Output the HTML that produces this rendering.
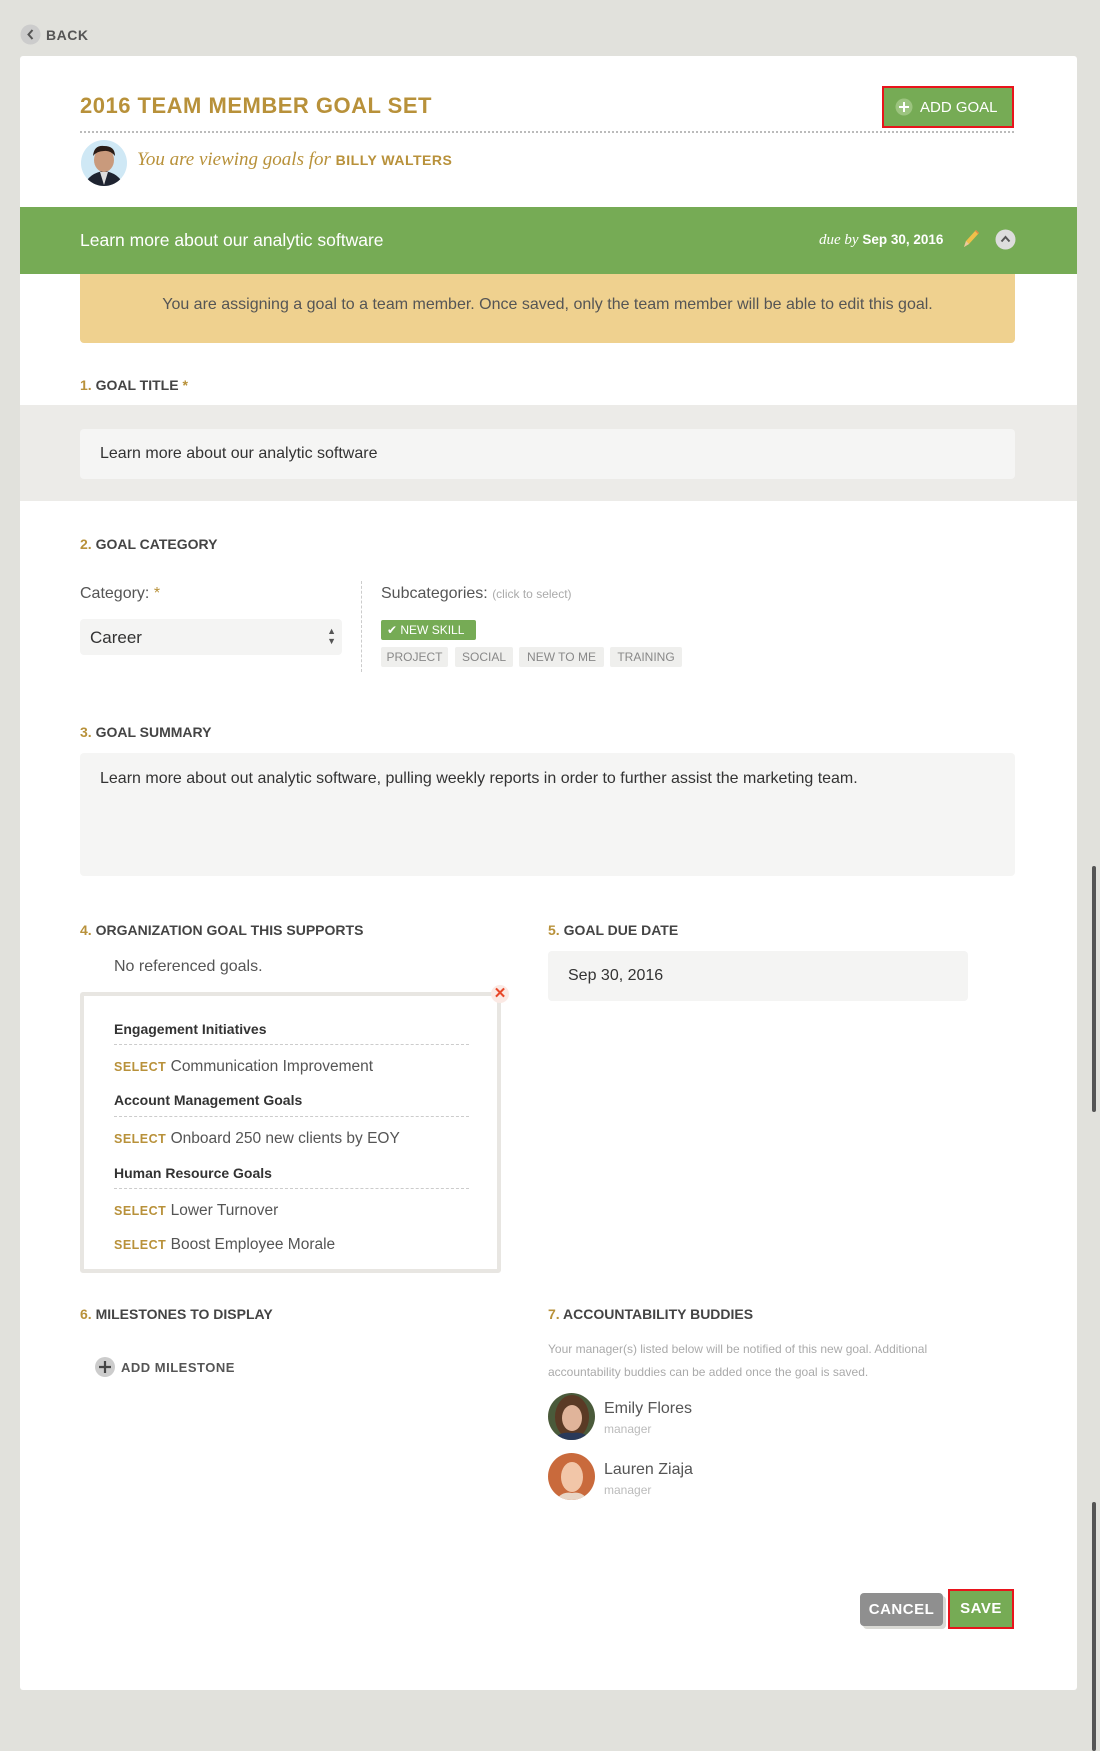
<!DOCTYPE html>
<html><head><meta charset="utf-8"><style>
*{box-sizing:border-box;margin:0;padding:0}
body{width:1100px;height:1751px;background:#e1e1dc;font-family:"Liberation Sans",sans-serif;position:relative;overflow:hidden;color:#444}
.a{position:absolute}
.card{position:absolute;left:20px;top:56px;width:1057px;height:1634px;background:#fff;border-radius:3px}
.h{font-size:14px;font-weight:bold;color:#444;position:absolute}
.h b{color:#b8913a}
.in{position:absolute;background:#f4f4f3;border-radius:4px;font-size:16px;color:#333}
.tag{position:absolute;top:647px;height:20px;background:#efefed;color:#888;font-size:12px;line-height:20px;text-align:center;border-radius:2px}
.sel{position:absolute;left:114px;font-size:15.5px;color:#555}
.sel b{color:#b8913a;font-size:12.5px;letter-spacing:.5px}
.grp{position:absolute;left:114px;font-size:14px;font-weight:bold;color:#333}
.dl{position:absolute;left:114px;width:355px;border-top:1px dashed #ccc}
</style></head><body>
<svg class="a" style="left:20px;top:24px" width="21" height="21"><circle cx="10.5" cy="10.5" r="10" fill="#ccc"/><path d="M12.5 6 L8.5 10.5 L12.5 15" stroke="#555" stroke-width="2" fill="none"/></svg>
<div class="a" style="left:46px;top:27px;font-size:14px;font-weight:bold;color:#555;letter-spacing:.5px">BACK</div>
<div class="card"></div>
<div class="a" style="left:80px;top:93px;font-size:22px;font-weight:bold;color:#b8913a;letter-spacing:.5px">2016 TEAM MEMBER GOAL SET</div>
<div class="a" style="left:882px;top:86px;width:132px;height:42px;border:2px solid #e8141c;background:#76ab55"></div>
<svg class="a" style="left:895px;top:98px" width="18" height="18"><circle cx="9" cy="9" r="8.5" fill="#9cc47f"/><path d="M9 4v10M4 9h10" stroke="#fff" stroke-width="2"/></svg>
<div class="a" style="left:920px;top:99px;font-size:15px;color:#fff">ADD GOAL</div>
<div class="a" style="left:80px;top:131px;width:934px;border-top:2px dotted #bbb"></div>
<svg class="a" style="left:80px;top:139px" width="48" height="48"><defs><clipPath id="c"><circle cx="24" cy="24" r="23"/></clipPath></defs><g clip-path="url(#c)"><rect width="48" height="48" fill="#cfe8f5"/><path d="M4 48 Q8 34 24 32 Q40 34 44 48Z" fill="#1e2330"/><path d="M20 33 L24 46 L28 33Z" fill="#ddd"/><ellipse cx="24" cy="21" rx="10" ry="12" fill="#c99a7c"/><path d="M13 17 Q14 6 24 7 Q35 7 35 17 Q30 11 24 12 Q17 12 13 17Z" fill="#2a1c16"/></g></svg>
<div class="a" style="left:137px;top:149px;font-family:'Liberation Serif',serif;font-style:italic;font-size:19px;color:#b8913a">You are viewing goals for <span style="font-family:'Liberation Sans';font-style:normal;font-weight:bold;font-size:14px;letter-spacing:.5px">BILLY WALTERS</span></div>
<div class="a" style="left:20px;top:207px;width:1057px;height:67px;background:#76ab55"></div>
<div class="a" style="left:80px;top:230px;font-size:17.5px;color:#fff">Learn more about our analytic software</div>
<div class="a" style="left:819px;top:232px;font-size:13.5px;color:#fff"><i style="font-family:'Liberation Serif',serif;font-size:15px">due by</i> <b>Sep 30, 2016</b></div>
<svg class="a" style="left:960px;top:228px" width="20" height="22"><path d="M4 19 L6 13 L16 2 L19 5 L9 16Z" fill="#f0c04a"/><path d="M4 19 L6 13 L9 16Z" fill="#e9c9a0"/><path d="M16 2 L19 5 L18 6 L15 3Z" fill="#d84"/></svg>
<svg class="a" style="left:995px;top:229px" width="21" height="21"><circle cx="10.5" cy="10.5" r="10" fill="#ddd"/><path d="M6.5 12.5 L10.5 8 L14.5 12.5" stroke="#555" stroke-width="2" fill="none"/></svg>
<div class="a" style="left:80px;top:274px;width:935px;height:69px;background:#efd18f;border-radius:0 0 4px 4px;font-size:16px;color:#555;text-align:center;line-height:62px">You are assigning a goal to a team member. Once saved, only the team member will be able to edit this goal.</div>
<div class="h" style="left:80px;top:377px"><b>1.</b> GOAL TITLE <b>*</b></div>
<div class="a" style="left:20px;top:405px;width:1057px;height:96px;background:#ecebe8"></div>
<div class="in" style="left:80px;top:429px;width:935px;height:50px;padding:16px 20px;background:#f5f5f4">Learn more about our analytic software</div>
<div class="h" style="left:80px;top:536px"><b>2.</b> GOAL CATEGORY</div>
<div class="a" style="left:80px;top:585px;font-size:16px;color:#555">Category: <span style="color:#b8913a">*</span></div>
<div class="in" style="left:80px;top:619px;width:262px;height:36px;padding:9px 10px;font-size:17px">Career<span style="position:absolute;right:6px;top:7px;font-size:9px;line-height:10px;color:#555">▲<br>▼</span></div>
<div class="a" style="left:361px;top:581px;height:91px;border-left:1px dashed #ccc"></div>
<div class="a" style="left:381px;top:585px;font-size:16px;color:#555">Subcategories: <span style="font-size:12px;color:#aaa">(click to select)</span></div>
<div class="a" style="left:381px;top:620px;width:95px;height:20px;background:#76ab55;border-radius:2px;color:#fff;font-size:12px;line-height:20px;padding-left:6px">✔ NEW SKILL</div>
<div class="tag" style="left:381px;width:67px">PROJECT</div>
<div class="tag" style="left:455px;width:58px">SOCIAL</div>
<div class="tag" style="left:519px;width:85px">NEW TO ME</div>
<div class="tag" style="left:610px;width:72px">TRAINING</div>
<div class="h" style="left:80px;top:724px"><b>3.</b> GOAL SUMMARY</div>
<div class="in" style="left:80px;top:753px;width:935px;height:123px;padding:17px 20px;background:#f5f5f4">Learn more about out analytic software, pulling weekly reports in order to further assist the marketing team.</div>
<div class="h" style="left:80px;top:922px"><b>4.</b> ORGANIZATION GOAL THIS SUPPORTS</div>
<div class="h" style="left:548px;top:922px"><b>5.</b> GOAL DUE DATE</div>
<div class="a" style="left:114px;top:958px;font-size:16px;color:#555">No referenced goals.</div>
<div class="in" style="left:548px;top:951px;width:420px;height:50px;padding:16px 20px">Sep 30, 2016</div>
<div class="a" style="left:80px;top:992px;width:421px;height:281px;border:4px solid #e8e6e2;border-radius:3px"></div>
<div class="a" style="left:491px;top:985px;width:18px;height:18px;border-radius:9px;background:#fbe9e4;color:#e8482a;font-weight:bold;font-size:15px;text-align:center;line-height:18px">✕</div>
<div class="grp" style="left:114px;top:1021px">Engagement Initiatives</div><div class="dl" style="top:1044px"></div>
<div class="sel" style="top:1058px"><b>SELECT</b> Communication Improvement</div>
<div class="grp" style="top:1092px">Account Management Goals</div><div class="dl" style="top:1116px"></div>
<div class="sel" style="top:1130px"><b>SELECT</b> Onboard 250 new clients by EOY</div>
<div class="grp" style="top:1165px">Human Resource Goals</div><div class="dl" style="top:1188px"></div>
<div class="sel" style="top:1202px"><b>SELECT</b> Lower Turnover</div>
<div class="sel" style="top:1236px"><b>SELECT</b> Boost Employee Morale</div>
<div class="h" style="left:80px;top:1306px"><b>6.</b> MILESTONES TO DISPLAY</div>
<div class="h" style="left:548px;top:1306px"><b>7.</b> ACCOUNTABILITY BUDDIES</div>
<svg class="a" style="left:95px;top:1357px" width="20" height="20"><circle cx="10" cy="10" r="10" fill="#ccc"/><path d="M10 4v12M4 10h12" stroke="#444" stroke-width="2.2"/></svg>
<div class="a" style="left:121px;top:1360px;font-size:13px;font-weight:bold;color:#555;letter-spacing:.5px">ADD MILESTONE</div>
<div class="a" style="left:548px;top:1338px;width:440px;font-size:12px;line-height:23px;color:#aaa">Your manager(s) listed below will be notified of this new goal. Additional accountability buddies can be added once the goal is saved.</div>
<svg class="a" style="left:548px;top:1393px" width="47" height="47"><defs><clipPath id="e"><circle cx="23.5" cy="23.5" r="23.5"/></clipPath></defs><g clip-path="url(#e)"><rect width="47" height="47" fill="#4a5a3a"/><ellipse cx="24" cy="24" rx="17" ry="22" fill="#5a3a25"/><ellipse cx="24" cy="25" rx="10" ry="13" fill="#e0b49a"/><path d="M4 47 Q12 38 24 40 Q36 38 44 47Z" fill="#2a3a5a"/></g></svg>
<div class="a" style="left:604px;top:1400px;font-size:16px;color:#555">Emily Flores</div>
<div class="a" style="left:604px;top:1422px;font-size:12px;color:#bbb">manager</div>
<svg class="a" style="left:548px;top:1453px" width="47" height="47"><defs><clipPath id="f"><circle cx="23.5" cy="23.5" r="23.5"/></clipPath></defs><g clip-path="url(#f)"><rect width="47" height="47" fill="#c96a3c"/><ellipse cx="24" cy="24" rx="11" ry="15" fill="#f2c6a8"/><path d="M8 47 Q14 38 24 40 Q34 38 40 47Z" fill="#e8d5c5"/></g></svg>
<div class="a" style="left:604px;top:1461px;font-size:16px;color:#555">Lauren Ziaja</div>
<div class="a" style="left:604px;top:1483px;font-size:12px;color:#bbb">manager</div>
<div class="a" style="left:863px;top:1596px;width:83px;height:33px;background:#d9d9d4;border-radius:4px"></div>
<div class="a" style="left:860px;top:1593px;width:83px;height:33px;background:#8f8f8f;border-radius:4px;color:#fff;font-size:15px;font-weight:bold;text-align:center;line-height:33px;letter-spacing:.5px">CANCEL</div>
<div class="a" style="left:948px;top:1589px;width:66px;height:40px;border:2px solid #e8141c;background:#76ab55;color:#fff;font-size:15px;font-weight:bold;text-align:center;line-height:36px;letter-spacing:.5px">SAVE</div>
<div class="a" style="left:1092px;top:866px;width:4px;height:246px;background:#555;border-radius:2px"></div>
<div class="a" style="left:1092px;top:1502px;width:4px;height:249px;background:#555;border-radius:2px"></div>
</body></html>
